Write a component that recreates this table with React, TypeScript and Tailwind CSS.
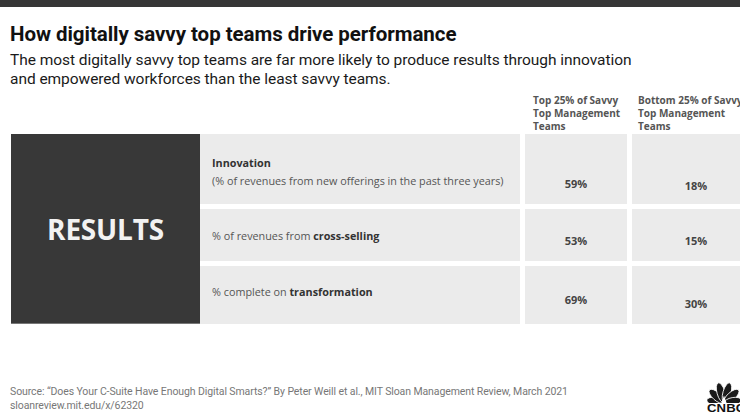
import React from "react";

const Peacock = () => (
  <svg width="34" height="21" viewBox="0 0 34 21" className="block">
    <g fill="#1a1a1a" stroke="#ffffff" strokeWidth="0.8">
      <ellipse cx="17" cy="12" rx="3.9" ry="8.5" transform="rotate(-80 17 21)" />
      <ellipse cx="17" cy="11" rx="4" ry="9.5" transform="rotate(-48 17 21)" />
      <ellipse cx="17" cy="10.3" rx="4" ry="10.2" transform="rotate(-16 17 21)" />
      <ellipse cx="17" cy="10.3" rx="4" ry="10.2" transform="rotate(16 17 21)" />
      <ellipse cx="17" cy="11" rx="4" ry="9.5" transform="rotate(48 17 21)" />
      <ellipse cx="17" cy="12" rx="3.9" ry="8.5" transform="rotate(80 17 21)" />
    </g>
    <path d="M17 13.5 L19.6 21 L14.4 21 Z" fill="#ffffff" />
  </svg>
);

export default function App() {
  return (
    <div className="relative w-[740px] h-[416px] bg-white overflow-hidden" style={{ fontFamily: "Roboto, 'Noto Sans', sans-serif" }}>
      <div className="h-[7px] bg-[#363636]" />
      <div className="pl-[10px]">
        <div className="mt-[15px] h-[25px] leading-[25px] text-[20.5px] font-bold text-[#111] tracking-[-0.05px]">
          How digitally savvy top teams drive performance
        </div>
        <div className="mt-[4px] text-[15.5px] leading-[19px] text-[#1a1a1a] tracking-[-0.05px]">
          <div>The most digitally savvy top teams are far more likely to produce results through innovation</div>
          <div>and empowered workforces than the least savvy teams.</div>
        </div>
      </div>

      <div className="flex mt-[5px] h-[40px] text-[10px] leading-[13px] font-bold text-[#555]" style={{ fontFamily: "'Open Sans', sans-serif" }}>
        <div className="w-[533px] shrink-0" />
        <div className="w-[105px] shrink-0">
          <div>Top 25% of Savvy</div>
          <div>Top Management</div>
          <div>Teams</div>
        </div>
        <div className="shrink-0 whitespace-nowrap">
          <div>Bottom 25% of Savvy</div>
          <div>Top Management</div>
          <div>Teams</div>
        </div>
      </div>

      <div className="flex pl-[11px]" style={{ fontFamily: "'Open Sans', sans-serif" }}>
        <div className="w-[189px] h-[190px] shrink-0 bg-[#383838] border-b border-[#777] flex items-center justify-center">
          <span className="text-[28px] font-bold text-[#f2f2f2] tracking-[-0.2px]">RESULTS</span>
        </div>
        <div className="flex flex-col gap-[5px]">
          {[
            { h: "h-[70px]", label: (
              <div className="pt-[22px]">
                <div className="font-bold text-[#333]">Innovation</div>
                <div className="mt-[4px]">(% of revenues from new offerings in the past three years)</div>
              </div>
            ), a: "59%", b: "18%", apt: "pt-[42px]", bpt: "pt-[44px]" },
            { h: "h-[52px]", label: (
              <div className="pt-[20px]">% of revenues from <span className="font-bold text-[#333]">cross-selling</span></div>
            ), a: "53%", b: "15%", apt: "pt-[24px]", bpt: "pt-[24px]" },
            { h: "h-[58px]", label: (
              <div className="pt-[19px]">% complete on <span className="font-bold text-[#333]">transformation</span></div>
            ), a: "69%", b: "30%", apt: "pt-[26px]", bpt: "pt-[30px]" },
          ].map((r, i) => (
            <div key={i} className={`flex gap-[5px] ${r.h}`}>
              <div className="w-[320px] bg-[#ebebeb] pl-[12px] text-[10.8px] leading-[14px] text-[#555]">
                {r.label}
              </div>
              <div className={`w-[102px] bg-[#ebebeb] text-center text-[11px] font-bold text-[#444] ${r.apt}`}>{r.a}</div>
              <div className={`w-[128px] bg-[#ebebeb] text-center text-[11px] font-bold text-[#444] ${r.bpt}`}>{r.b}</div>
            </div>
          ))}
        </div>
      </div>

      <div className="pl-[10px] mt-[61px] text-[10.5px] leading-[14px] text-[#777] tracking-[-0.1px]">
        <div>Source: “Does Your C-Suite Have Enough Digital Smarts?” By Peter Weill et al., MIT Sloan Management Review, March 2021</div>
        <div>sloanreview.mit.edu/x/62320</div>
      </div>

      <div className="absolute left-[707px] top-[382px] flex flex-col items-start">
        <Peacock />
        <div className="mt-[1px] text-[10.5px] leading-[9px] font-black text-[#111] tracking-[0.1px] whitespace-nowrap scale-x-125 origin-left" style={{ fontFamily: "'Liberation Sans', Arial, sans-serif" }}>CNBC</div>
      </div>
    </div>
  );
}
